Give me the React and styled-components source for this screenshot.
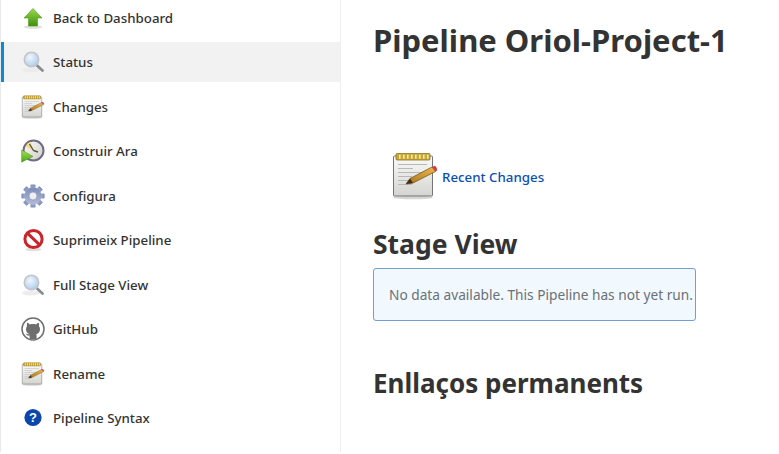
import React from "react";
import styled, { createGlobalStyle } from "styled-components";

const Global = createGlobalStyle`
  html, body { margin: 0; padding: 0; background: #fff; overflow: hidden; }
  body { font-family: "Noto Sans", "Open Sans", "Liberation Sans", sans-serif; color: #333; }
`;
const Page = styled.div`
  display: flex; width: 779px; height: 454px; overflow: hidden; box-sizing: border-box;
`;
const Sidebar = styled.nav`
  width: 341px; flex: none; box-sizing: border-box; height: 454px;
  border-left: 1px solid #e9e9e9; border-right: 1px solid #eeeeee;
  display: flex; flex-direction: column; gap: 4.44px; margin-top: -2px; padding-left: 0;
`;
const Row = styled.a`
  display: flex; align-items: center; height: 40px; flex: none; box-sizing: border-box;
  padding-left: ${p => (p.$active ? "17px" : "20px")};
  border-left: ${p => (p.$active ? "3px solid #0b8ad6" : "0")};
  background: ${p => (p.$active ? "#f2f2f2" : "transparent")};
  font-size: 13.3px; font-weight: 500; color: #333;
`;
const IconBox = styled.span`
  width: 24px; height: 24px; display: block; flex: none; margin-right: 8px;
  svg { display: block; }
`;
const Main = styled.main`
  flex: 1; padding: 0 0 0 32px; min-width: 0;
`;
const Title = styled.h1`
  margin: 20px 0 0; font-size: 31px; line-height: 40px; font-weight: 700; color: #333;
`;
const Changes = styled.div`
  display: flex; align-items: center; margin: 92px 0 0 18px; height: 48px;
`;
const ChangesLink = styled.a`
  font-size: 13.3px; font-weight: 500; color: #0b4fb3; margin: 2px 0 0 3px;
`;
const Heading = styled.h2`
  margin: 26px 0 0; font-size: 26.5px; line-height: 36px; font-weight: 700; color: #333;
`;
const Notice = styled.div`
  box-sizing: border-box; width: 323px; height: 53px; margin-top: 6px; padding-left: 15px;
  display: flex; align-items: center; white-space: nowrap;
  background: #f2f9fe; border: 1px solid #6f9fd4; border-radius: 3px;
  font-size: 13.7px; color: #6a7177;
`;
const Heading2 = styled(Heading)`
  margin-top: 44px; font-size: 26px;
`;

const Notepad = ({ size = 24, id }) => (
  <svg width={size} height={size} viewBox="0 0 48 48">
    <defs>
      <linearGradient id={id + "p"} x1="0" y1="0" x2="0" y2="1">
        <stop offset="0" stopColor="#fafafa" /><stop offset="1" stopColor="#d4d4d0" />
      </linearGradient>
      <linearGradient id={id + "s"} x1="0" y1="1" x2="1" y2="0">
        <stop offset="0" stopColor="#a8741c" /><stop offset="1" stopColor="#eeb84c" />
      </linearGradient>
    </defs>
    <ellipse cx="22" cy="45.5" rx="20" ry="1.8" fill="#d6d6d6" />
    <rect x="2.5" y="4" width="39" height="40" rx="1" fill={`url(#${id}p)`} stroke="#757575" strokeWidth="1" />
    <rect x="5" y="1.5" width="34" height="6.5" rx="1" fill="#c9a838" stroke="#8c7420" strokeWidth="0.8" />
    {[8, 12, 16, 20, 24, 28, 32, 36].map(x => <rect key={x} x={x} y="2.6" width="1.6" height="4.2" fill="#f3e9a4" />)}
    {[12, 16, 20, 24, 28, 32].map((y, i) => (
      <rect key={y} x="7" y={y} width={i === 1 ? 15 : i > 2 ? 14 : 29} height="1" fill="#b8b8b8" />
    ))}
    <path d="M15 32 L19 26.5 L41 15 L44.5 19.5 L22 31 Z" fill={`url(#${id}s)`} stroke="#6f4d12" strokeWidth="0.7" />
    <path d="M41 15 L43.6 13.8 Q46.4 15.2 46 18.6 L44.5 19.5 Z" fill="#d9384a" />
    <path d="M15 32 L19 26.5 L22 31 Z" fill="#40301c" />
  </svg>
);

const Magnifier = ({ id }) => (
  <svg width="24" height="24" viewBox="0 0 24 24">
    <defs>
      <radialGradient id={id} cx="0.4" cy="0.35" r="0.75">
        <stop offset="0" stopColor="#f0f6fc" /><stop offset="1" stopColor="#a7c8ea" />
      </radialGradient>
    </defs>
    <ellipse cx="10" cy="20" rx="9" ry="2.6" fill="#ececec" />
    <path d="M15.5 15 L21.5 20.5" stroke="#8a8c8d" strokeWidth="2.8" strokeLinecap="round" />
    <circle cx="10.5" cy="9.5" r="7.2" fill={`url(#${id})`} stroke="#c2c6cb" strokeWidth="1.6" />
  </svg>
);

const UpArrow = () => (
  <svg width="24" height="24" viewBox="0 0 24 24">
    <defs>
      <linearGradient id="ua" x1="0" y1="0" x2="0" y2="1">
        <stop offset="0" stopColor="#9ad94a" /><stop offset="1" stopColor="#3f8f0e" />
      </linearGradient>
    </defs>
    <ellipse cx="12" cy="21" rx="9" ry="1.8" fill="#dedede" />
    <path d="M12 2.5 L21 12 H16.5 V20 H7.5 V12 H3 Z" fill="url(#ua)" stroke="#4d9a18" strokeWidth="0.6" />
  </svg>
);

const ClockBuild = () => (
  <svg width="24" height="24" viewBox="0 0 24 24">
    <defs>
      <linearGradient id="cb" x1="0" y1="0" x2="0" y2="1">
        <stop offset="0" stopColor="#a8e04a" /><stop offset="1" stopColor="#45a81c" />
      </linearGradient>
      <linearGradient id="cf" x1="0" y1="0" x2="1" y2="1">
        <stop offset="0" stopColor="#fbfbf6" /><stop offset="1" stopColor="#cfcdc4" />
      </linearGradient>
    </defs>
    <circle cx="12.5" cy="11.5" r="10" fill="url(#cf)" stroke="#6f6a8a" strokeWidth="2" />
    <path d="M12.5 11.5 L9.5 2.8 A9 9 0 0 0 4.5 7.5 Z" fill="#f2de80" />
    <path d="M12.5 11.5 L8.5 5 M12.5 11.5 L17 13" stroke="#555" strokeWidth="1.4" />
    <path d="M0.6 11 L12 17.4 L0.6 23.2 Z" fill="url(#cb)" stroke="#4d8f1c" strokeWidth="0.5" />
  </svg>
);

const Gear = () => {
  const teeth = [0, 45, 90, 135, 180, 225, 270, 315];
  return (
    <svg width="24" height="24" viewBox="0 0 24 24">
      <defs>
        <linearGradient id="gr" x1="0" y1="0" x2="0" y2="1">
          <stop offset="0" stopColor="#7c8dbb" /><stop offset="1" stopColor="#b3bbd6" />
        </linearGradient>
      </defs>
      {teeth.map(a => (
        <rect key={a} x="9.4" y="0.4" width="5.2" height="6" rx="1" fill="url(#gr)" transform={`rotate(${a} 12 12)`} />
      ))}
      <circle cx="12" cy="12" r="8.4" fill="url(#gr)" />
      <circle cx="12" cy="12" r="4" fill="#eeeef4" stroke="#7c88ab" strokeWidth="0.6" />
    </svg>
  );
};

const NoEntry = () => (
  <svg width="24" height="24" viewBox="0 0 24 24">
    <ellipse cx="12.5" cy="21.5" rx="8" ry="1.6" fill="#dedede" />
    <circle cx="12.5" cy="11" r="8.6" fill="#fff" stroke="#c9252b" strokeWidth="3" />
    <path d="M6.6 5.4 L18.4 16.6" stroke="#c9252b" strokeWidth="3" />
  </svg>
);

const GitHub = () => (
  <svg width="24" height="24" viewBox="0 0 24 24">
    <circle cx="12" cy="12" r="11" fill="#fff" stroke="#6e6e6e" strokeWidth="1.5" />
    <path fill="#6e6e6e" d="M8.6 22 V18.6 C6 19 5.3 17.6 5 16.8 C6 16.6 6.6 17.8 8.8 17.2 C6.4 16.6 5 15 5 12 C5 10.8 5.4 9.9 6 9.2 C5.8 8.4 5.8 7.2 6.2 5.8 C7.2 5.8 8 6.6 8.8 7.4 C10.8 6.8 13.2 6.8 15.2 7.4 C16 6.6 16.8 5.8 17.8 5.8 C18.2 7.2 18.2 8.4 18 9.2 C18.6 9.9 19 10.8 19 12 C19 15 17.6 16.6 15.2 17.2 C15.6 17.7 15.6 18.2 15.6 18.8 V22 Z" />
  </svg>
);

const Help = () => (
  <svg width="24" height="24" viewBox="0 0 24 24">
    <circle cx="12" cy="11.5" r="8.6" fill="#0b46ad" />
    <text x="12" y="16" textAnchor="middle" fontSize="13" fontWeight="700" fill="#fff" fontFamily="Liberation Sans, sans-serif">?</text>
  </svg>
);

const items = [
  ["Back to Dashboard", <UpArrow />],
  ["Status", <Magnifier id="m1" />, true],
  ["Changes", <Notepad id="n1" />],
  ["Construir Ara", <ClockBuild />],
  ["Configura", <Gear />],
  ["Suprimeix Pipeline", <NoEntry />],
  ["Full Stage View", <Magnifier id="m2" />],
  ["GitHub", <GitHub />],
  ["Rename", <Notepad id="n2" />],
  ["Pipeline Syntax", <Help />],
];

export default function App() {
  return (
    <Page>
      <Global />
      <Sidebar>
        {items.map(([label, icon, active]) => (
          <Row key={label} $active={active}>
            <IconBox>{icon}</IconBox>
            {label}
          </Row>
        ))}
      </Sidebar>
      <Main>
        <Title>Pipeline Oriol-Project-1</Title>
        <Changes>
          <Notepad size={48} id="n3" />
          <ChangesLink>Recent Changes</ChangesLink>
        </Changes>
        <Heading>Stage View</Heading>
        <Notice>No data available. This Pipeline has not yet run.</Notice>
        <Heading2>Enllaços permanents</Heading2>
      </Main>
    </Page>
  );
}
